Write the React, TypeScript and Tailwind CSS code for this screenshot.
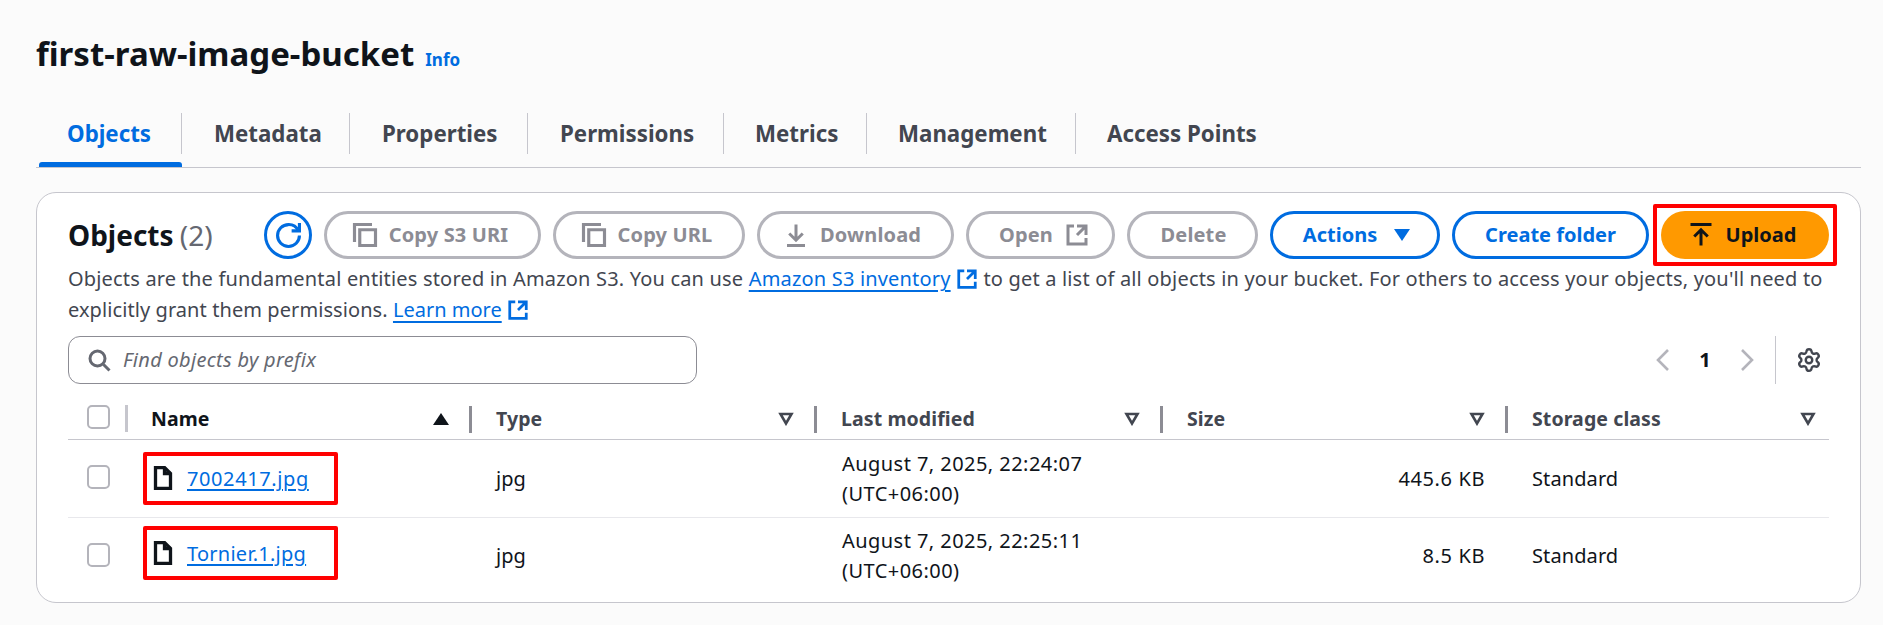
import { Settings } from "lucide-react";
import type { ReactNode } from "react";

const FONT = "font-['Noto_Sans','Open_Sans',sans-serif]";

function Icon({ children, className, sw = 2 }: { children: ReactNode; className?: string; sw?: number }) {
  return (
    <svg viewBox="0 0 16 16" fill="none" stroke="currentColor" strokeWidth={sw} className={className}>
      {children}
    </svg>
  );
}

const CopyIcon = () => (
  <Icon className="w-[28px] h-[28px]" sw={1.8}>
    <path d="M2 12V2h10" />
    <path d="M5 5h9v9H5z" />
  </Icon>
);
const ExternalIcon = ({ className }: { className: string }) => (
  <Icon className={className}>
    <path d="M14 8.01v-6H8M14.02 2 8 8.01M6 2.01H2v12h12v-3.99" />
  </Icon>
);
const FilterCaret = () => (
  <svg viewBox="0 0 16 14" className="w-[16px] h-[14px]" fill="none" stroke="#424650" strokeWidth={2.6}>
    <path d="M2.5 2h11L8 11.5z" />
  </svg>
);

function GhostButton({ children, className }: { children: ReactNode; className: string }) {
  return (
    <button className={`${className} h-[48px] shrink-0 rounded-full border-[3px] border-[#b4b4bb] flex items-center justify-center text-[#8c8c94] font-bold text-[20px] tracking-[0.15px]`}>
      {children}
    </button>
  );
}

function BlueButton({ children, className }: { children: ReactNode; className: string }) {
  return (
    <button className={`${className} h-[48px] shrink-0 rounded-full border-[3px] border-[#006ce0] flex items-center justify-center gap-[17px] text-[#006ce0] font-bold text-[20px]`}>
      {children}
    </button>
  );
}

function HeaderCell({ label, active, last }: { label: string; active?: boolean; last?: boolean }) {
  return (
    <div className="flex items-center h-[28px]">
      <span className={`pl-[24px] -mt-[1px] font-bold text-[19.5px] tracking-[0.1px] flex-1 ${active ? "text-[#0f141a] -ml-[1px]" : "text-[#424650]"}`}>{label}</span>
      {active ? (
        <svg viewBox="0 0 16 14" className="w-[16px] h-[14px] mr-[20px]">
          <path d="M8 1l8 12H0z" fill="#0f141a" />
        </svg>
      ) : (
        <span className={last ? "mr-[13px]" : "mr-[20px]"}>
          <FilterCaret />
        </span>
      )}
      {!last && <span className="w-[3px] h-[27px] bg-[#8c8c94]" />}
    </div>
  );
}

function FileLink({ name, boxClass, linkClass }: { name: string; boxClass: string; linkClass: string }) {
  return (
    <div className={`w-[195px] border-4 border-[#ff0000] rounded-[2px] flex items-center pl-[4px] ml-[15px] ${boxClass}`}>
      <Icon className="w-[24px] h-[24px] text-[#0f141a] shrink-0" sw={2.2}>
        <path d="M9 1H3v14h10V5z" />
        <path d="M9 1v4h4" />
      </Icon>
      <a className={`ml-[12px] pt-[2px] text-[#006ce0] text-[20px] underline underline-offset-[3px] ${linkClass}`}>{name}</a>
    </div>
  );
}

function Row({ name, date, size, rowClass, boxClass, checkClass, linkClass }: { name: string; date: string; size: string; rowClass: string; boxClass: string; checkClass: string; linkClass: string }) {
  return (
    <div className={`grid grid-cols-[60px_344px_345px_346px_345px_1fr] items-center text-[20px] text-[#0f141a] ${rowClass}`}>
      <div className={`ml-[19px] w-[23px] h-[24px] rounded-[5px] border-2 border-[#b4b4bb] bg-white ${checkClass}`} />
      <FileLink name={name} boxClass={boxClass} linkClass={linkClass} />
      <div className="pl-[24px]">jpg</div>
      <div className="pl-[25px] leading-[30px] tracking-[0.45px]">
        {date}
        <br />
        (UTC+06:00)
      </div>
      <div className="pr-[23px] text-right tracking-[0.6px]">{size}</div>
      <div className="pl-[24px] tracking-[0.1px]">Standard</div>
    </div>
  );
}

const TABS = [
  { label: "Objects", w: "w-[143px]", pl: "pl-[28px]", active: true },
  { label: "Metadata", w: "w-[168px]", pl: "pl-[32px]" },
  { label: "Properties", w: "w-[178px]", pl: "pl-[32px]" },
  { label: "Permissions", w: "w-[196px]", pl: "pl-[32px]" },
  { label: "Metrics", w: "w-[143px]", pl: "pl-[31px]" },
  { label: "Management", w: "w-[209px]", pl: "pl-[31px]" },
  { label: "Access Points", w: "w-[212px]", pl: "pl-[31px]" },
];

export default function App() {
  return (
    <div className={`${FONT} w-[1883px] h-[625px] overflow-hidden bg-[#fbfbfb] pl-[36px] pr-[22px] pt-[29px]`}>
      <div className="flex items-baseline h-[54px]">
        <h1 className="text-[33px] font-bold text-[#0f141a] leading-[50px]">first-raw-image-bucket</h1>
        <a className="ml-[11px] text-[17px] font-bold text-[#006ce0]">Info</a>
      </div>

      <div className="mt-[30px] h-[54px] flex pl-[3px] border-b border-[#c6c6cd] box-content">
        {TABS.map((t, i) => (
          <div key={t.label} className={`${t.w} relative h-[54px] flex items-start`}>
            <span className={`w-full h-[41px] pt-[1px] flex items-center ${t.pl} text-[22.3px] font-bold ${i < TABS.length - 1 ? "border-r border-[#c6c6cd]" : ""} ${t.active ? "text-[#006ce0]" : "text-[#424650]"}`}>
              {t.label}
            </span>
            {t.active && <span className="absolute left-0 right-0 bottom-0 h-[5px] rounded-t-[3px] bg-[#006ce0]" />}
          </div>
        ))}
      </div>

      <div className="mt-[24px] h-[411px] border border-[#c6c6cd] rounded-[20px] bg-white pl-[31px] pr-[31px]">
        <div className="flex items-center mt-[11px] h-[62px] -mr-[8px]">
          <div className="w-[196px] shrink-0 text-[28px] text-[#0f141a] font-bold whitespace-nowrap">
            Objects <span className="font-normal text-[#656871] -ml-[1px]">(2)</span>
          </div>
          <div className="flex items-center gap-[12px]">
            <button className="w-[48px] h-[48px] rounded-full border-[3px] border-[#006ce0] text-[#006ce0] flex items-center justify-center">
              <Icon className="w-[25px] h-[25px]">
                <path d="M10 5h5V0" />
                <path d="M15 8a7 7 0 0 1-14 0 7 7 0 0 1 7-7 6.87 6.87 0 0 1 6.3 4" />
              </Icon>
            </button>
            <GhostButton className="w-[217px] gap-[10px] pr-[6px]"><CopyIcon />Copy S3 URI</GhostButton>
            <GhostButton className="w-[192px] gap-[10px] pr-[6px]"><CopyIcon />Copy URL</GhostButton>
            <GhostButton className="w-[197px] gap-[12px] pr-[6px]">
              <Icon className="w-[24px] h-[24px]">
                <path d="M8 1v10M3.5 7 8 11.5 12.5 7M2 15h12" />
              </Icon>
              Download
            </GhostButton>
            <GhostButton className="w-[149px] gap-[12px] pl-[7px]">Open<ExternalIcon className="w-[24px] h-[24px]" /></GhostButton>
            <GhostButton className="w-[131px] pl-[2px]">Delete</GhostButton>
            <BlueButton className="w-[170px] pl-[3px]">
              Actions
              <svg viewBox="0 0 16 14" className="w-[16px] h-[14px]">
                <path d="M0 1h16L8 13z" fill="#006ce0" />
              </svg>
            </BlueButton>
            <BlueButton className="w-[197px]">Create folder</BlueButton>
            <div className="-ml-[8px] w-[184px] h-[62px] shrink-0 border-4 border-[#ff0000] rounded-[2px] flex items-center justify-center">
              <button className="w-[168px] h-[48px] rounded-full bg-[#ff9900] text-[#0f141a] font-bold text-[20px] flex items-center justify-center gap-[13px] pr-[5px]">
                <Icon className="w-[24px] h-[24px]">
                  <path d="M8 15V5M3.5 9 8 4.5 12.5 9M1 1h14" />
                </Icon>
                Upload
              </button>
            </div>
          </div>
        </div>

        <p className="mt-[-3px] text-[20px] leading-[31px] text-[#424650] w-[1770px] whitespace-nowrap">
          <span className="tracking-[0.18px]">
            Objects are the fundamental entities stored in Amazon S3. You can use{" "}
            <a className="text-[#006ce0] underline underline-offset-[4px]">Amazon S3 inventory</a>{" "}
            <ExternalIcon className="inline-block align-[-4px] w-[22px] h-[22px] text-[#006ce0]" /> to get a list of all objects in your bucket. For others to access your objects, you'll need to
          </span>
          <br />
          <span className="tracking-[0.08px]">explicitly grant them permissions. </span>
          <a className="text-[#006ce0] underline underline-offset-[4px]">Learn more</a>{" "}
          <ExternalIcon className="inline-block align-[-4px] w-[22px] h-[22px] text-[#006ce0]" />
        </p>

        <div className="mt-[11px] flex items-center h-[48px]">
          <div className="w-[629px] h-[48px] rounded-[12px] border border-[#8c8c94] flex items-center pl-[18px] gap-[12px] text-[#656871]">
            <Icon className="w-[24px] h-[24px]">
              <circle cx="7" cy="7" r="5" />
              <path d="m15 15-4-4" />
            </Icon>
            <span className="italic text-[20px] tracking-[0.3px]">Find objects by prefix</span>
          </div>
          <div className="ml-auto flex items-center">
            <svg viewBox="0 0 16 24" className="w-[16px] h-[24px]" fill="none" stroke="#b4b4bb" strokeWidth={2.6}>
              <path d="M13 2 3 12l10 10" />
            </svg>
            <span className="w-[68px] text-center font-bold text-[20px] text-[#0f141a]">1</span>
            <svg viewBox="0 0 16 24" className="w-[16px] h-[24px]" fill="none" stroke="#b4b4bb" strokeWidth={2.6}>
              <path d="m3 2 10 10L3 22" />
            </svg>
            <span className="ml-[20px] w-px h-[48px] bg-[#c6c6cd]" />
            <Settings className="ml-[20px] mr-[7px] text-[#424650]" size={26} strokeWidth={2.2} />
          </div>
        </div>

        <div className="mt-[21px] grid grid-cols-[60px_344px_345px_346px_345px_1fr] border-b border-[#c6c6cd] h-[35px] items-start">
          <div className="flex items-start h-[28px]">
            <div className="ml-[19px] w-[23px] h-[24px] rounded-[5px] border-2 border-[#b4b4bb] bg-white" />
            <span className="ml-[15px] w-[3px] h-[27px] bg-[#c6c6cd]" />
          </div>
          <HeaderCell label="Name" active />
          <HeaderCell label="Type" />
          <HeaderCell label="Last modified" />
          <HeaderCell label="Size" />
          <HeaderCell label="Storage class" last />
        </div>

        <Row name="7002417.jpg" date="August 7, 2025, 22:24:07" size="445.6 KB" rowClass="h-[78px] border-b border-[#e8e8ec]" boxClass="h-[53px] -mt-[1px]" checkClass="-mt-[3px]" linkClass="tracking-[0.6px]" />
        <Row name="Tornier.1.jpg" date="August 7, 2025, 22:25:11" size="8.5 KB" rowClass="h-[75px]" boxClass="h-[54px] -mt-[5px]" checkClass="-mt-[2px]" linkClass="tracking-[0.25px]" />
      </div>
    </div>
  );
}
